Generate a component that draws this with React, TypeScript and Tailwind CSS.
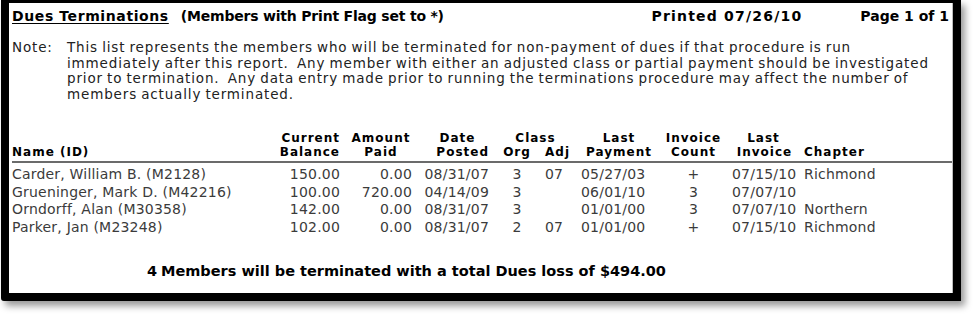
const members = [
  { name: 'Carder, William B. (M2128)', balance: '150.00', paid: '0.00', posted: '08/31/07', org: '3', adj: '07', lastPayment: '05/27/03', count: '+', lastInvoice: '07/15/10', chapter: 'Richmond' },
  { name: 'Grueninger, Mark D. (M42216)', balance: '100.00', paid: '720.00', posted: '04/14/09', org: '3', adj: '', lastPayment: '06/01/10', count: '3', lastInvoice: '07/07/10', chapter: '' },
  { name: 'Orndorff, Alan (M30358)', balance: '142.00', paid: '0.00', posted: '08/31/07', org: '3', adj: '', lastPayment: '01/01/00', count: '3', lastInvoice: '07/07/10', chapter: 'Northern' },
  { name: 'Parker, Jan (M23248)', balance: '102.00', paid: '0.00', posted: '08/31/07', org: '2', adj: '07', lastPayment: '01/01/00', count: '+', lastInvoice: '07/15/10', chapter: 'Richmond' },
];

// column template shared by header and rows
const cols = 'grid grid-cols-[263px_65px_72px_77px_56px_33px_82px_67px_73px_1fr]';

export default function App() {
  return (
    <div className="w-[974px] h-[314px] bg-white pl-[1px] font-['DejaVu_Sans',Verdana,sans-serif]">
      <div className="w-[960px] h-[301px] border-t-[3px] border-l-[8px] border-r-[8px] border-b-[8px] border-black rounded-bl-[3px] shadow-[4px_5px_7px_rgba(0,0,0,0.4)] bg-white">
        <div className="h-full pl-[3px] pr-[3px] border-r border-[#bdbdbd]">
          {/* title row */}
          <div className="flex items-center h-[26px] text-[14px] font-bold text-black pt-[1px]">
            <span className="underline underline-offset-2 tracking-[0.6px]">Dues Terminations</span>
            <span className="ml-[12px] tracking-[-0.2px]">(Members with Print Flag set to *)</span>
            <span className="ml-auto tracking-[1.2px]">Printed 07/26/10</span>
            <span className="ml-[58px]">Page 1 of 1</span>
          </div>

          {/* note */}
          <div className="flex mt-[11px] text-[13.5px] leading-[15.7px] text-[#222] tracking-[0.85px] [word-spacing:-1px]">
            <span className="w-[55px] shrink-0">Note:</span>
            <p className="whitespace-nowrap">
              This list represents the members who will be terminated for non-payment of dues if that procedure is run<br />
              immediately after this report.&nbsp; Any member with either an adjusted class or partial payment should be investigated<br />
              prior to termination.&nbsp; Any data entry made prior to running the terminations procedure may affect the number of<br />
              members actually terminated.
            </p>
          </div>

          {/* table header */}
          <div className={`${cols} mt-[28px] text-[12px] leading-[14px] tracking-[1px] font-bold text-black`}>
            <div className="row-start-2">Name (ID)</div>
            <div className="col-start-2 text-right">Current</div>
            <div className="col-start-2 row-start-2 text-right">Balance</div>
            <div className="col-start-3 text-center pl-[10px]">Amount</div>
            <div className="col-start-3 row-start-2 text-center pl-[10px]">Paid</div>
            <div className="col-start-4 text-center pl-[14px]">Date</div>
            <div className="col-start-4 row-start-2 text-right">Posted</div>
            <div className="col-start-5 col-span-2 text-center pl-[4px]">Class</div>
            <div className="col-start-5 row-start-2 text-center">Org</div>
            <div className="col-start-6 row-start-2">Adj</div>
            <div className="col-start-7 text-center">Last</div>
            <div className="col-start-7 row-start-2 text-center">Payment</div>
            <div className="col-start-8 text-center">Invoice</div>
            <div className="col-start-8 row-start-2 text-center">Count</div>
            <div className="col-start-9 text-center">Last</div>
            <div className="col-start-9 row-start-2 text-center pl-[2px]">Invoice</div>
            <div className="col-start-10 row-start-2 pl-[4px]">Chapter</div>
          </div>
          <div className="mt-[2px] -mr-[3px] h-[2px] bg-[#6b6b6b]" />

          {/* rows */}
          <div className="mt-[3px] text-[14px] leading-[17.7px] tracking-[0.2px] text-[#3b3b3b]">
            {members.map((m) => (
              <div key={m.name} className={cols}>
                <div>{m.name}</div>
                <div className="text-right">{m.balance}</div>
                <div className="text-right">{m.paid}</div>
                <div className="text-right">{m.posted}</div>
                <div className="text-center">{m.org}</div>
                <div>{m.adj}</div>
                <div className="pl-[3px]">{m.lastPayment}</div>
                <div className="text-center">{m.count}</div>
                <div className="pl-[5px]">{m.lastInvoice}</div>
                <div className="pl-[4px]">{m.chapter}</div>
              </div>
            ))}
          </div>

          {/* footer total */}
          <div className="mt-[24px] pl-[135px] flex text-[14.5px] font-bold text-black">
            <span className="w-[14px] shrink-0">4</span>
            <span>Members will be terminated with a total Dues loss of $494.00</span>
          </div>
        </div>
      </div>
    </div>
  );
}
